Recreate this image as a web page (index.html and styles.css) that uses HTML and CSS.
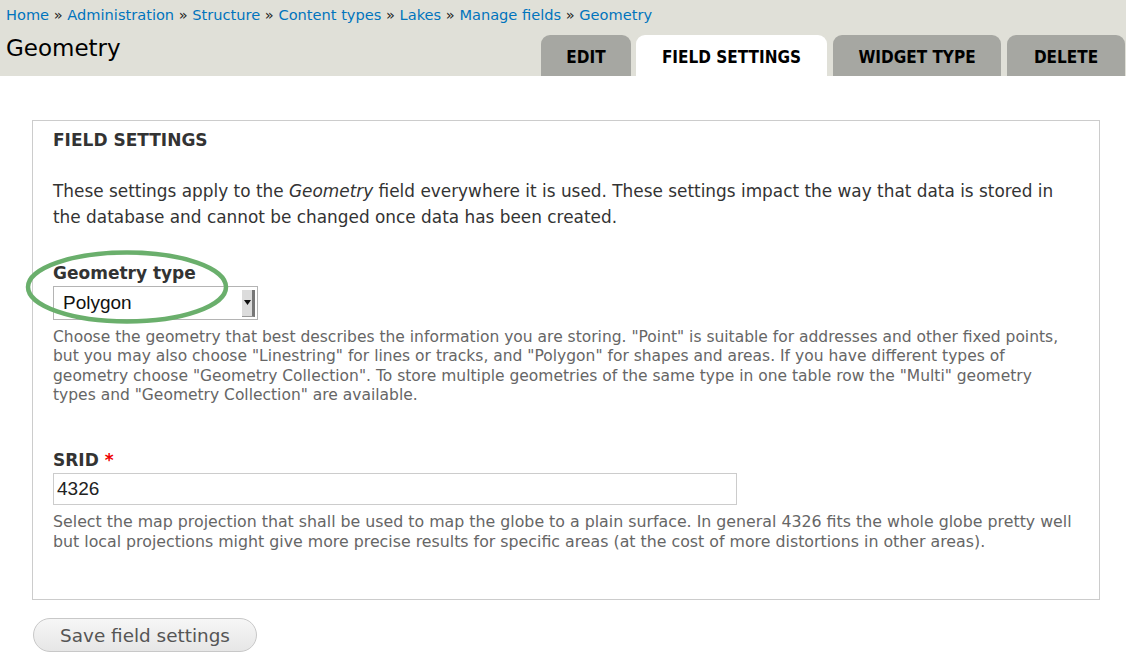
FILE: index.html
```html
<!DOCTYPE html>
<html>
<head>
<meta charset="utf-8">
<link rel="stylesheet" href="styles.css">
</head>
<body>
<header class="head">
  <nav class="crumbs">
    <a href="#">Home</a> » <a href="#">Administration</a> » <a href="#">Structure</a> » <a href="#">Content types</a> » <a href="#">Lakes</a> » <a href="#">Manage fields</a> » <a href="#">Geometry</a>
  </nav>
  <div class="title-row">
    <h1 class="title">Geometry</h1>
    <ul class="tabs">
      <li class="tab tab-edit">Edit</li>
      <li class="tab tab-active">Field settings</li>
      <li class="tab tab-widget">Widget type</li>
      <li class="tab tab-delete">Delete</li>
    </ul>
  </div>
</header>
<main class="content">
  <section class="fieldset">
    <div class="legend">Field settings</div>
    <p class="intro">These settings apply to the <em>Geometry</em> field everywhere it is used. These settings impact the way that data is stored in the database and cannot be changed once data has been created.</p>
    <div class="form-item form-geom">
      <svg class="highlight" width="210" height="80" viewBox="0 0 210 80"><ellipse cx="104" cy="38" rx="99" ry="34.5" fill="none" stroke="#6aaf6c" stroke-width="4.5"/></svg>
      <label class="label">Geometry type</label>
      <div class="select"><span class="select-value">Polygon</span><span class="select-arrow"><svg width="7" height="5" viewBox="0 0 7 5"><path d="M0 0H7L3.5 5Z" fill="#111"/></svg></span></div>
      <div class="desc">Choose the geometry that best describes the information you are storing. "Point" is suitable for addresses and other fixed points,<br>but you may also choose "Linestring" for lines or tracks, and "Polygon" for shapes and areas. If you have different types of<br>geometry choose "Geometry Collection". To store multiple geometries of the same type in one table row the "Multi" geometry<br>types and "Geometry Collection" are available.</div>
    </div>
    <div class="form-item form-srid">
      <label class="label">SRID <span class="req">*</span></label>
      <div class="input">4326</div>
      <div class="desc desc-srid">Select the map projection that shall be used to map the globe to a plain surface. In general 4326 fits the whole globe pretty well<br>but local projections might give more precise results for specific areas (at the cost of more distortions in other areas).</div>
    </div>
  </section>
  <button class="btn">Save field settings</button>
</main>
</body>
</html>
```

FILE: styles.css
```css
html, body {
  margin: 0;
  padding: 0;
  background: #fff;
}
body {
  font-family: "DejaVu Sans", Verdana, sans-serif;
  color: #333;
  overflow: hidden;
}
.head {
  background: #e0e0d8;
  height: 76px;
  box-sizing: border-box;
  padding: 6px 1px 0 6px;
}
.crumbs {
  font-size: 14.6px;
  line-height: 18px;
  color: #222;
  white-space: nowrap;
}
.crumbs a {
  color: #0074bd;
  text-decoration: none;
}
.title-row {
  display: flex;
  justify-content: space-between;
  align-items: flex-end;
  height: 52px;
}
.title {
  align-self: flex-start;
  margin: 10px 0 0;
  font-size: 23px;
  line-height: 28px;
  font-weight: normal;
  color: #000;
}
.tabs {
  display: flex;
  list-style: none;
  margin: 0;
  padding: 0;
  gap: 5px;
}
.tab {
  height: 41px;
  box-sizing: border-box;
  padding-top: 11px;
  background: #a6a7a2;
  border-radius: 9px 9px 0 0;
  font-family: "DejaVu Sans Condensed", "DejaVu Sans", sans-serif;
  font-stretch: condensed;
  font-weight: 700;
  font-size: 17px;
  line-height: 22px;
  text-transform: uppercase;
  color: #000;
  text-align: center;
  white-space: nowrap;
}
.tab-edit { width: 90px; }
.tab-active { width: 191px; background: #fff; margin-right: 1px; }
.tab-widget { width: 168px; margin-right: 1px; }
.tab-delete { width: 118px; }
.content {
  padding: 44px 26px 0 32px;
}
.fieldset {
  position: relative;
  border: 1px solid #ccc;
  height: 480px;
  box-sizing: border-box;
  padding: 9px 20px 0;
}
.legend {
  font-weight: bold;
  font-size: 17px;
  line-height: 20px;
  text-transform: uppercase;
  color: #333;
}
.intro {
  margin: 28px 0 0;
  font-size: 16.9px;
  line-height: 26px;
  color: #333;
}
.form-item {
  position: relative;
}
.form-geom {
  margin-top: 33px;
}
.form-srid {
  margin-top: 44px;
}
.highlight {
  position: absolute;
  left: -30px;
  top: -14px;
  pointer-events: none;
  z-index: 2;
}
.label {
  display: block;
  font-weight: bold;
  font-size: 17px;
  line-height: 20px;
  color: #333;
}
.req {
  color: #e00;
}
.select {
  margin-top: 3px;
  width: 205px;
  height: 34px;
  box-sizing: border-box;
  border: 1px solid #b4b4b4;
  background: #fff;
  display: flex;
  align-items: center;
  justify-content: space-between;
  padding: 0 2px 0 9px;
}
.select-value {
  font-family: "Liberation Sans", Arial, sans-serif;
  font-size: 19px;
  color: #111;
}
.select-arrow {
  width: 13px;
  height: 27px;
  box-sizing: border-box;
  background: #dcdcdc;
  border-right: 3px solid #777;
  border-bottom: 1px solid #999;
  display: flex;
  align-items: center;
  justify-content: center;
}
.desc {
  margin-top: 8px;
  white-space: nowrap;
  font-size: 15.5px;
  line-height: 19.4px;
  color: #666;
}
.desc-srid {
  margin-top: 7px;
  font-size: 15.8px;
  line-height: 20px;
}
.input {
  margin-top: 3px;
  width: 684px;
  height: 32px;
  box-sizing: border-box;
  border: 1px solid #ccc;
  padding: 0 3px;
  font-family: "Liberation Sans", Arial, sans-serif;
  font-size: 19px;
  line-height: 30px;
  color: #222;
}
.btn {
  margin: 18px 0 0 1px;
  width: 224px;
  height: 34px;
  border: 1px solid #c8c8c8;
  border-radius: 17px;
  background: linear-gradient(#f6f6f6, #e6e6e6);
  font-family: "DejaVu Sans", Verdana, sans-serif;
  font-size: 18.4px;
  color: #555;
  padding: 0;
}
```
